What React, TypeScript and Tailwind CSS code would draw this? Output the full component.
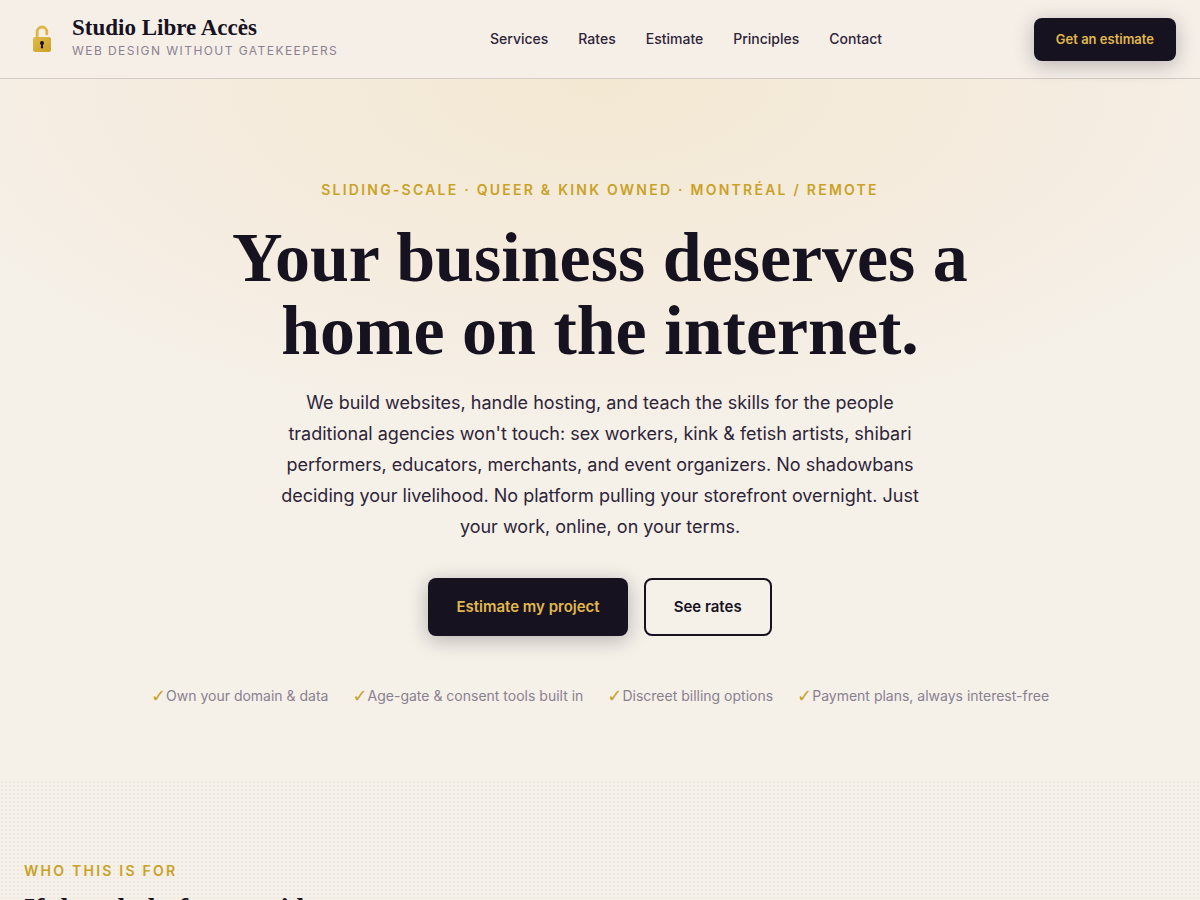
import type { ReactNode } from "react";

const navLinks = ["Services", "Rates", "Estimate", "Principles", "Contact"];

const promises = [
  "Own your domain & data",
  "Age-gate & consent tools built in",
  "Discreet billing options",
  "Payment plans, always interest-free",
];

function LockLogo() {
  return (
    <svg className="h-9 w-9 shrink-0" viewBox="0 0 36 36" fill="none" aria-hidden="true">
      <defs>
        <linearGradient id="gold" x1="0" y1="0" x2="1" y2="1">
          <stop offset="0" stopColor="#e3b94a" />
          <stop offset="1" stopColor="#c9a227" />
        </linearGradient>
      </defs>
      <path d="M13.2 17.5V10.8a4.8 4.8 0 0 1 9.6 0v2.1" stroke="#deb445" strokeWidth="2.8" strokeLinecap="round" />
      <rect x="9" y="16" width="18" height="15" rx="2.2" fill="url(#gold)" />
      <circle cx="18" cy="22" r="2" fill="#17121f" />
      <path d="M17.2 22.5h1.6l.4 4.7h-2.4z" fill="#17121f" />
    </svg>
  );
}

function Eyebrow({ children }: { children: ReactNode }) {
  return (
    <p className="text-sm leading-[22px] font-semibold uppercase tracking-[0.16em] text-[#c9a227]">
      {children}
    </p>
  );
}

export default function App() {
  return (
    <div className="min-h-screen bg-[#f5f0e8] font-['Inter',sans-serif] text-[#17121f]">
      <header className="border-b border-[#d3cbc8] bg-[#f6efe8]">
        <div className="flex items-center justify-between px-6 py-4">
          <a href="#top" className="flex items-center gap-3">
            <LockLogo />
            <span className="flex flex-col">
              <span className="font-['Liberation_Serif',serif] text-[23px] leading-6 font-bold">Studio Libre Accès</span>
              <span className="text-xs leading-[22px] uppercase tracking-[0.12em] text-[#8a8190]">
                Web design without gatekeepers
              </span>
            </span>
          </a>
          <nav className="hidden gap-[30px] text-sm font-medium text-[#2d2438] md:flex">
            {navLinks.map((label) => (
              <a key={label} href={`#${label.toLowerCase()}`}>
                {label}
              </a>
            ))}
          </nav>
          <a
            href="#estimate"
            className="rounded-lg bg-[#17121f] px-[22px] py-3 text-[13px] leading-[19px] font-semibold text-[#e0b84c] shadow-[0_4px_20px_rgba(23,18,31,0.28)]"
          >
            Get an estimate
          </a>
        </div>
      </header>

      <main id="top">
        <section className="bg-[radial-gradient(ellipse_60%_50%_at_50%_0%,#f3e8d2_0%,#f5ede2_75%,#f5f0e8_100%)] px-6 pt-[100px] pb-[72px] text-center">
          <Eyebrow>Sliding-scale · Queer &amp; kink owned · Montréal / Remote</Eyebrow>
          <h1 className="mx-auto mt-5 max-w-[800px] font-['Liberation_Serif',serif] text-[70px] leading-[73px] font-bold">
            Your business deserves a home on the internet.
          </h1>
          <p className="mx-auto mt-5 max-w-[660px] text-lg leading-[31px] text-[#2d2438]">
            We build websites, handle hosting, and teach the skills for the people traditional agencies won't touch: sex
            workers, kink &amp; fetish artists, shibari performers, educators, merchants, and event organizers. No
            shadowbans deciding your livelihood. No platform pulling your storefront overnight. Just your work, online,
            on your terms.
          </p>
          <div className="mt-9 flex flex-wrap justify-center gap-4 text-[15px] leading-[26px] font-semibold">
            <a
              href="#estimate"
              className="rounded-lg bg-[#17121f] px-7 py-4 text-[#e0b84c] shadow-[0_4px_20px_rgba(23,18,31,0.28)]"
            >
              Estimate my project
            </a>
            <a href="#rates" className="rounded-lg border-2 border-[#17121f] px-7 py-[14px]">
              See rates
            </a>
          </div>
          <ul className="mt-12 flex flex-wrap justify-center gap-x-6 gap-y-2 text-sm leading-6 text-[#8a8190]">
            {promises.map((item) => (
              <li key={item} className="flex items-center">
                <span className="font-['DejaVu_Sans',sans-serif] text-lg leading-6 text-[#c9a227]">✓</span>
                {item}
              </li>
            ))}
          </ul>
        </section>

        <section className="bg-[radial-gradient(circle_at_2px_2px,rgba(23,18,31,0.03)_1px,transparent_1px)] bg-[size:4px_4px] px-6 py-20">
          <Eyebrow>Who this is for</Eyebrow>
          <h2 className="mt-2 font-['Liberation_Serif',serif] text-[28px] leading-9 font-bold">
            If the ad platforms said no
          </h2>
        </section>
      </main>
    </div>
  );
}
